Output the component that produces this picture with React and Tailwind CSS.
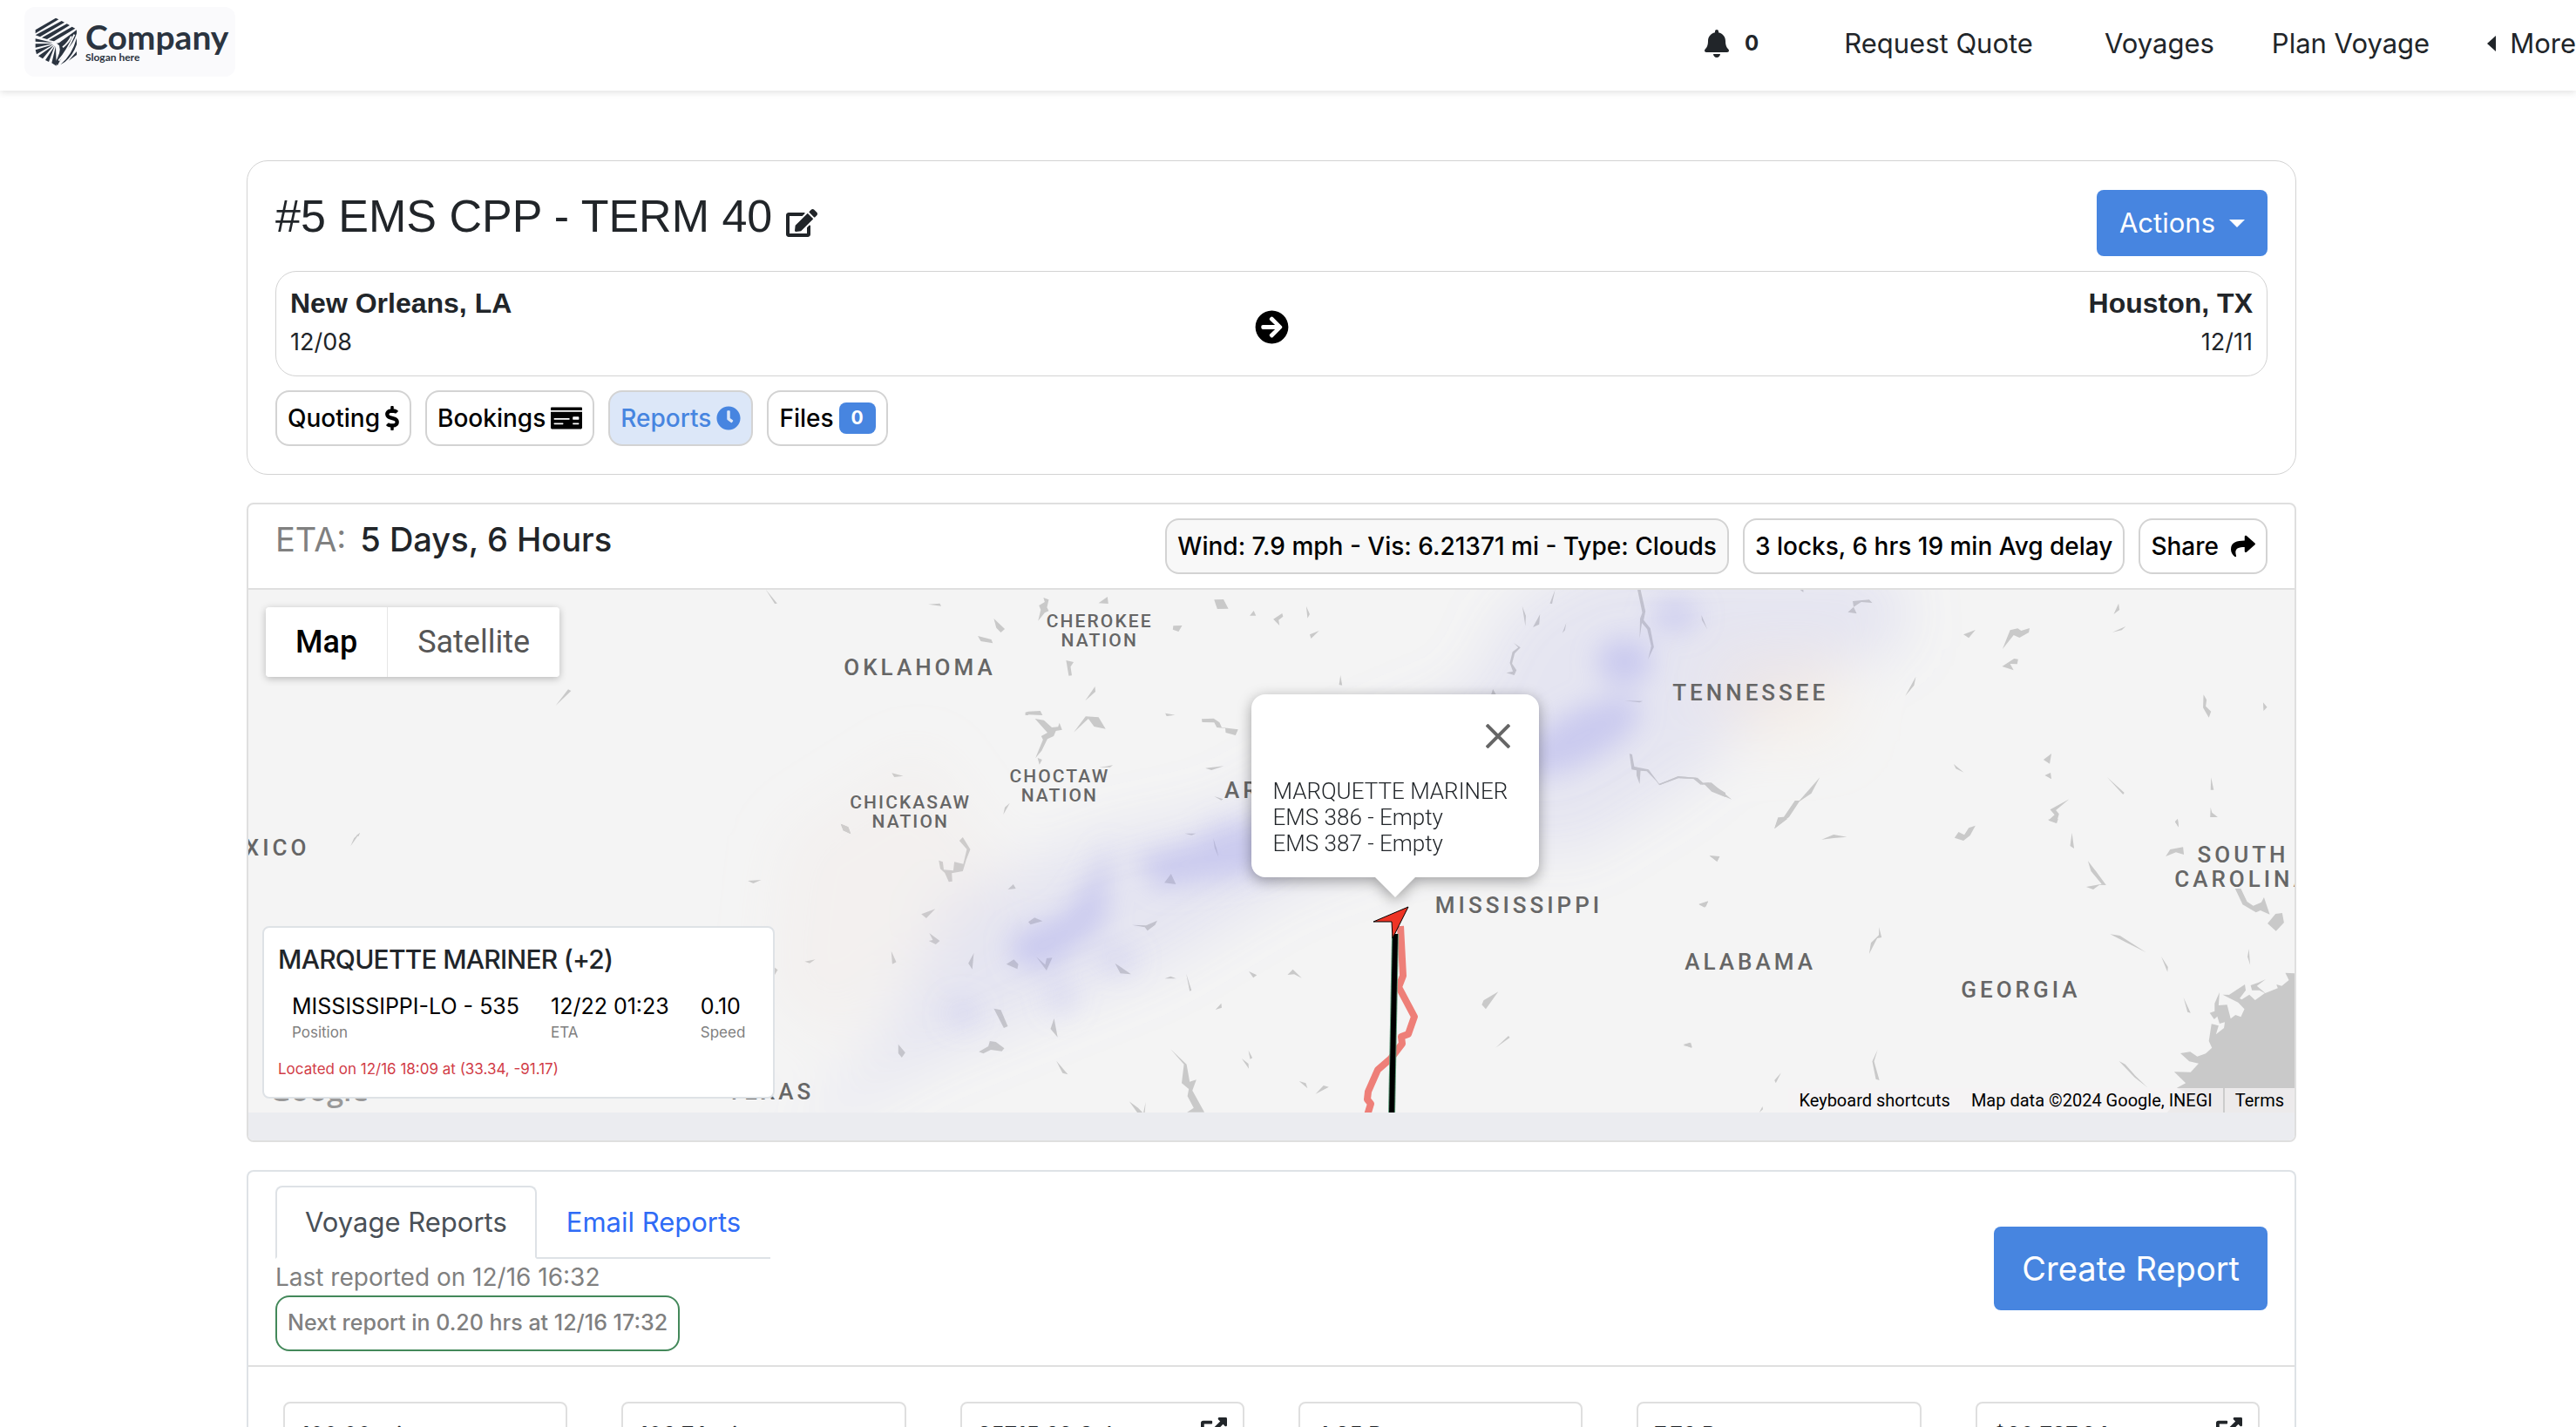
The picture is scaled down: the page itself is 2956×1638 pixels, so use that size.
import { useState } from 'react';
import {
  FaArrowCircleRight,
  FaBell,
  FaClock,
  FaDollarSign,
  FaEdit,
  FaExternalLinkAlt,
  FaMoneyCheck,
  FaShare,
} from 'react-icons/fa';

const stats = [
  { value: '100.00 mi' },
  { value: '106.74 mi' },
  { value: '35715.62 Gal', link: true },
  { value: '4.35 D' },
  { value: '7.76 D' },
  { value: '$20,737.24', link: true },
];

const vesselFields = [
  { label: 'Position', value: 'MISSISSIPPI-LO - 535' },
  { label: 'ETA', value: '12/22 01:23' },
  { label: 'Speed', value: '0.10' },
];

const pill = 'flex h-16 items-center rounded-2xl border-2 border-[#d3d3d3] px-3 text-[28px] font-medium text-black';

const Logo = () => (
  <a href="#home" className="flex h-20 items-center gap-2 rounded-xl bg-[#fafafc] pl-3 pr-2 text-[#2b3440]">
    <svg width="50" height="58" viewBox="0 0 150 170" fill="currentColor" aria-hidden="true">
      <path d="M2 44 72 3 82 8 2 56ZM2 62 92 13 102 18 18 68ZM24 71 110 23 120 28 42 76ZM48 79 128 33 139 39 66 83Z" />
      <path d="M2 74 62 88 2 84ZM2 92 62 91 2 105ZM2 113 64 94 6 128ZM12 134 66 96 27 143ZM36 148 69 98 48 154ZM58 158 72 100 74 168Z" />
      <path d="M70 86Q78 96 92 82L144 44V56Q134 92 104 118L78 166 68 158Q92 122 84 98Z" />
      <path d="M88 164Q128 130 144 72V94Q132 130 104 154ZM116 150 144 118V130Z" />
      <path d="M82 150Q112 116 136 60M96 104Q116 88 126 66" fill="none" stroke="#fafafc" strokeWidth="6" />
    </svg>
    <span className="flex flex-col font-['Lato',sans-serif] font-bold">
      <span className="text-[39px] leading-9">Company</span>
      <span className="text-xs leading-3">Slogan here</span>
    </span>
  </a>
);

const Navbar = () => (
  <header className="relative flex h-[104px] items-center justify-between bg-white pb-2 pl-7 shadow-[0_2px_8px_rgba(0,0,0,0.12)]">
    <Logo />
    <nav className="flex items-center gap-[66px] pt-1 text-[31px]">
      <button type="button" aria-label="Notifications" className="mr-8 flex items-center gap-4">
        <FaBell size={32} />
        <span className="text-2xl font-bold">0</span>
      </button>
      <a href="#quote" className="mr-4">Request Quote</a>
      <a href="#voyages">Voyages</a>
      <a href="#plan">Plan Voyage</a>
      <button type="button" className="flex items-center gap-4">
        <svg width="10" height="18" viewBox="0 0 10 18" fill="currentColor" aria-hidden="true">
          <path d="M10 0V18L0 9Z" />
        </svg>
        More
      </button>
    </nav>
  </header>
);

const VoyageCard = () => (
  <section className="rounded-3xl border border-[#d3d3d3] px-8 pb-8 pt-[33px]">
    <div className="flex items-start justify-between">
      <h1 className="flex items-end gap-4 font-['Liberation_Sans',Arial,sans-serif] text-[52px] leading-[60px]">
        #5 EMS CPP - TERM 40
        <button type="button" aria-label="Edit voyage name" className="pb-1"><FaEdit size={36} /></button>
      </h1>
      <button type="button" className="flex h-[76px] items-center gap-4 rounded-lg bg-[#4785e0] px-[26px] text-[31px] text-white">
        Actions
        <svg width="18" height="9" viewBox="0 0 18 9" fill="currentColor" aria-hidden="true">
          <path d="M0 0H18L9 9Z" />
        </svg>
      </button>
    </div>
    <div className="mt-[17px] flex h-[121px] items-center justify-between rounded-3xl border border-[#d3d3d3] px-4">
      <div className="flex-1 pb-1">
        <p className="font-['Liberation_Sans',Arial,sans-serif] text-[32px] font-bold leading-[46px]">New Orleans, LA</p>
        <p className="text-[27px] leading-[44px]">12/08</p>
      </div>
      <FaArrowCircleRight size={39} className="mt-2 text-black" />
      <div className="flex-1 pb-1 text-right">
        <p className="font-['Liberation_Sans',Arial,sans-serif] text-[32px] font-bold leading-[46px]">Houston, TX</p>
        <p className="text-[27px] leading-[44px]">12/11</p>
      </div>
    </div>
    <div className="mt-4 flex gap-4">
      <button type="button" className={`${pill} gap-1.5`}>Quoting <FaDollarSign size={28} className="-mx-1.5" /></button>
      <button type="button" className={`${pill} gap-1.5`}>Bookings <FaMoneyCheck size={36} /></button>
      <button type="button" className="flex h-16 items-center gap-1.5 rounded-2xl border-2 border-[#d3d3d3] bg-[#dce7f8] px-3 text-[28px] font-medium text-[#4785e0]">
        Reports <FaClock size={28} />
      </button>
      <button type="button" className={`${pill} gap-1.5`}>
        Files
        <span className="flex h-9 w-[42px] items-center justify-center rounded-lg bg-[#4785e0] text-[21px] font-bold text-white">0</span>
      </button>
    </div>
  </section>
);

const Terrain = () => (
  <svg className="absolute inset-0 h-full w-full" viewBox="285 677 2348 600" preserveAspectRatio="xMidYMid slice" aria-hidden="true">
    <defs>
      <filter id="soft" x="-50%" y="-50%" width="200%" height="200%"><feGaussianBlur stdDeviation="32" /></filter>
      <filter id="core" x="-50%" y="-50%" width="200%" height="200%"><feGaussianBlur stdDeviation="15" /></filter>
    </defs>
    <rect x="285" y="677" width="2348" height="600" fill="#f4f4f4" />

    {/* Water */}
    <g fill="#c9c9c9">
      <g transform="translate(280 560) scale(.574 .3333)">
        <path d="M1043 350 1066 398 1061 399ZM1368 401 1391 398 1394 407ZM1499 450 1521 486 1513 498 1504 482ZM1467 510 1494 522 1497 535 1473 528ZM623 750 648 694 654 699ZM1295 982 1318 992 1300 996ZM1518 1125 1521 1100 1531 1085ZM1193 1157 1208 1168 1213 1192 1198 1180ZM224 1198 232 1188 229 1200ZM1562 773 1568 770V783H1562Z" />
      </g>
      <g transform="translate(280 940) scale(.574 .3333)">
        <path d="M213 94 220 66 232 47 222 72ZM1193 17 1208 28 1213 52 1198 40ZM1430 75 1437 63 1452 105 1444 140 1437 180 1415 187 1416 215 1409 217 1401 186 1392 172 1389 143 1397 148 1399 175 1418 178 1420 148 1438 155 1445 104ZM1007 213 1034 210 1018 222ZM1527 243 1538 225 1543 240ZM1354 328 1382 310 1364 342ZM1370 393 1391 420 1383 432 1369 420 1377 417ZM1294 455 1304 493 1296 500ZM1459 462 1456 518 1448 497ZM1524 500 1539 484 1548 500 1546 517ZM1121 491 1142 484 1131 497ZM1058 508 1067 520 1060 540ZM1499 653 1513 658 1527 714 1519 720ZM1308 776 1322 805 1315 822 1308 807ZM1469 802 1488 783 1491 765 1503 768 1520 790 1515 800 1493 795 1478 808Z" />
      </g>
      <g transform="translate(1180 560) scale(.5102 .3333)">
        <path d="M34 378 46 385 42 412 46 424 37 430 22 458 28 420 24 405 37 393ZM158 397 178 375 180 399ZM418 385 439 384 450 416 425 417ZM498 440 507 423 512 440ZM551 452 571 432 573 443 563 455 565 474ZM625 407 633 435 628 449ZM326 475 346 474 338 495 325 488ZM633 505 654 492 636 519ZM85 594 102 600 95 616 98 646 91 647ZM150 684 151 702 128 733ZM702 645 706 680 699 678ZM0 770 27 768 32 783 0 781ZM15 795 35 800 53 825 67 823 70 809 76 833 62 837 57 855 43 865 30 905 16 931 33 867 29 855 43 843ZM102 842 129 787 158 790 174 830 148 822 135 795ZM308 776 330 782 311 786ZM390 796 417 794 430 808 435 825 472 832 466 852 444 843 443 828 424 825 418 808 391 807ZM21 930 31 936 25 953ZM159 963 190 955 184 962ZM398 965 440 958 412 972ZM1185 350 1178 399 1173 398ZM1111 408 1119 440 1118 476ZM1151 435 1149 470 1135 480ZM1210 465 1207 490 1201 500ZM1370 350 1377 350 1388 425 1384 455 1399 484 1407 548 1394 590 1401 545 1392 487 1380 465 1375 518 1376 450 1381 430ZM1092 534 1107 550 1094 570 1088 605 1098 628 1093 645 1075 637 1090 632 1083 603 1089 565 1102 550ZM1514 438 1520 460 1527 487 1515 455ZM1045 693 1052 712H1041ZM1341 733 1382 734 1375 739ZM1352 915 1358 918 1363 960 1395 970 1419 1019 1462 994 1505 998 1518 1016 1530 1015 1568 1050V1065L1537 1046 1520 1020 1512 1022 1496 1002 1462 1000 1421 1023 1391 976 1377 974 1375 1020 1368 990V973L1357 970Z" />
      </g>
      <g transform="translate(1180 900) scale(.5102 .3333)">
        <path d="M418 42 438 52 434 56ZM352 170 377 170 367 176ZM416 186 424 225 428 252 419 220ZM306 340 321 309 332 345ZM0 475 14 460 32 472 5 484ZM233 485 265 487 290 470 285 485 268 505 262 493ZM18 595 38 622 41 600 54 598 41 642ZM195 617 210 632 231 655 207 652ZM307 670 320 662 333 670ZM355 652 367 710 363 713ZM496 645 514 658 506 667ZM583 657 595 638 615 668 598 655ZM421 777 434 755 435 770ZM58 807 66 872 50 843ZM63 953 89 1000 77 995ZM320 913 356 965 363 1025 378 1018 369 1055 396 1130H357L372 1115 358 1075 361 1050 345 1030 350 965ZM227 1093 247 1115 257 1131H245ZM264 1095 262 1131H259ZM495 917 504 943 499 947ZM480 945 495 963 496 980ZM609 1023 624 1030 628 1048ZM646 1067 664 1038 676 1043ZM1020 760 1024 745 1057 715 1029 775ZM1051 908 1080 867 1083 873ZM1532 247 1554 250 1549 266ZM1508 413 1529 403 1524 422ZM1473 900 1490 891 1493 907Z" />
      </g>
      <g transform="translate(1900 560) scale(.5102 .3333)">
        <path d="M324 350H332V360ZM443 390 480 385 487 396 462 393 445 410 452 433 432 428 445 410ZM692 505 719 489 704 517ZM797 490 814 484 822 492 841 483 839 498 818 516 805 507 780 555ZM1041 398 1043 420 1030 435ZM1057 477 1048 490 1027 497ZM779 615 806 588 815 590 813 607 797 606 805 628ZM585 650 581 680 561 717ZM1232 712 1239 730 1237 752 1249 770 1244 791 1231 757ZM1366 739 1375 755 1367 768ZM890 915 886 950 872 936ZM670 951 693 980 675 967ZM875 990 888 981 890 1003ZM369 997 350 1052 323 1080 300 1133 267 1173 275 1135 288 1133 313 1077 323 1077ZM1015 996 1054 1050 1051 1056ZM1249 997 1255 1040H1248ZM930 1072 900 1110 907 1123 901 1155 883 1145 897 1126 887 1108ZM1248 1100 1251 1118 1264 1134H1247ZM1168 1150 1174 1140 1176 1168ZM0 1007 8 1020 50 993 90 998 105 1016 125 1015 171 1073 135 1050 120 1021 104 1022 90 1003 50 999 8 1024Z" />
      </g>
      <g transform="translate(1900 940) scale(.5102 .3333)">
        <path d="M275 0H296L267 34ZM373 71 400 54 430 62 400 66ZM882 2 905 0 902 14ZM672 65 681 45 694 55 704 31 719 23 707 57 692 75ZM936 48 941 102 932 93ZM1168 10 1174 0 1176 29ZM121 127 144 129 138 147ZM97 295 118 284 110 305ZM1147 129 1157 105 1186 97 1188 123 1170 115ZM972 145 990 180 1013 228 998 227 984 243 968 234 1003 224 979 180ZM1303 240 1316 240 1330 285 1344 299 1362 287 1368 270 1381 329 1360 315 1350 322 1320 295ZM1376 360 1394 327 1409 324 1413 357 1395 386ZM502 373 508 408 498 411 480 465 484 427 502 400ZM1022 397 1044 402 1103 460 1060 427ZM1137 474 1152 510 1151 527ZM1334 448 1337 503 1331 475ZM1187 615 1203 668 1196 665ZM62 777 77 770 81 789ZM499 795 491 835 503 900 495 896 487 835ZM282 874 270 910 267 900ZM1042 834 1056 845 1079 885 1106 925 1077 890ZM233 1011 240 990 241 1000ZM1325 570 1327 590 1310 625 1290 605Z" />
        <path d="M1440 532 1416 530 1424 555 1408 575 1396 570 1399 583 1371 600 1352 575 1372 552 1356 563 1338 573 1341 590 1358 590 1370 600 1348 624 1335 605 1318 622 1298 606 1275 605 1310 632 1324 655 1316 682 1304 675 1293 688 1285 640 1266 642 1268 597 1257 635 1257 662 1246 668 1256 690 1263 680 1268 705 1280 700 1278 720 1260 742 1266 712 1250 706 1244 765 1251 788 1237 808 1218 818 1202 802 1180 807 1200 835 1221 842 1203 872 1166 871 1192 910 1172 926 1190 940 1150 1011H1440Z" />
        <path d="M1224 773 1231 792 1238 776 1236 803Z" fill="#f4f4f4" />
      </g>
    </g>

    {/* Precipitation overlay */}
    <g filter="url(#soft)" fill="#9999e0" fillOpacity=".17">
      <path d="M900 1320 1010 1200 1090 1030 1260 960 1400 930 1500 870 1690 790 1730 700 1830 640 2180 650 2190 740 2040 800 1940 900 1810 980 1640 960 1480 1020 1330 1110 1180 1170 1060 1220Z" />
      <path d="M900 960 1060 860 1160 1000 960 1200 880 1140Z" fill="#f0dcd4" />
      <path d="M1970 760 2120 750 2110 850 1990 850Z" fill="#f8e4d0" fillOpacity=".3" />
    </g>
    <g filter="url(#core)" fill="#a6a6ec" fillOpacity=".42">
      <ellipse cx="1814" cy="845" rx="76" ry="30" transform="rotate(-28 1814 845)" />
      <ellipse cx="1864" cy="760" rx="32" ry="28" />
      <ellipse cx="1922" cy="706" rx="28" ry="20" fillOpacity=".32" />
      <path d="M1300 985 1370 965 1400 945 1500 940 1460 1000 1330 1020Z" />
      <path d="M1158 1075 1220 1050 1250 1010 1275 965 1268 1060 1205 1112 1165 1110Z" />
      <ellipse cx="1282" cy="1102" rx="24" ry="16" fillOpacity=".22" />
      <ellipse cx="1218" cy="1145" rx="18" ry="20" fillOpacity=".22" />
      <ellipse cx="1105" cy="1163" rx="20" ry="16" fillOpacity=".22" />
    </g>

    {/* Sailed track, planned course and vessel */}
    <path d="M1607 1063 1610 1120 1605 1133 1623 1167 1616 1187 1608 1190 1609 1198 1596 1215 1581 1228 1570 1253 1569 1262 1573 1267 1569 1280" fill="none" stroke="#ee7f78" strokeWidth="8" strokeLinejoin="round" />
    <path d="M1601 1072 1597 1280" stroke="#5b9a78" strokeWidth="8" />
    <path d="M1601 1072 1597 1280" stroke="#000" strokeWidth="6" />
    <path d="M1616 1041 1576 1058 1597 1058 1598 1077Z" fill="#ee3425" stroke="#000" strokeWidth="1" />
  </svg>
);

const VoyageMap = () => {
  const [mapType, setMapType] = useState('map');

  return (
    <div className="relative h-[600px] overflow-hidden font-['Roboto',sans-serif]">
      <Terrain />

      {/* Place names */}
      <div className="absolute inset-0 whitespace-nowrap text-[26px] font-medium leading-7 tracking-[4px] text-[#666]">
        <span className="absolute left-[29.1%] top-[75px]">OKLAHOMA</span>
        <span className="absolute left-[69.6%] top-[104px]">TENNESSEE</span>
        <span className="absolute left-[58%] top-[348px]">MISSISSIPPI</span>
        <span className="absolute left-[70.2%] top-[413px]">ALABAMA</span>
        <span className="absolute left-[83.7%] top-[445px]">GEORGIA</span>
        <span className="absolute left-[47.7%] top-[216px]">ARKANSAS</span>
        <span className="absolute -right-5 top-[290px] text-center">SOUTH<br />CAROLINA</span>
        <span className="absolute right-[97%] top-[282px]">NEW MEXICO</span>
        <span className="absolute left-[23.4%] top-[562px]">TEXAS</span>
        <span className="absolute left-[39%] top-[25px] text-center text-[21px] leading-[22px] tracking-widest">CHEROKEE<br />NATION</span>
        <span className="absolute left-[37.2%] top-[203px] text-center text-[21px] leading-[22px] tracking-widest">CHOCTAW<br />NATION</span>
        <span className="absolute left-[29.4%] top-[233px] text-center text-[21px] leading-[22px] tracking-widest">CHICKASAW<br />NATION</span>
      </div>

      <div className="absolute left-5 top-5 flex rounded shadow-[0_2px_8px_rgba(0,0,0,0.25)]">
        <button
          type="button"
          onClick={() => setMapType('map')}
          className={`h-20 rounded-l bg-white px-[34px] text-4xl ${mapType === 'map' ? 'font-medium text-black' : 'text-[#565656]'}`}
        >
          Map
        </button>
        <button
          type="button"
          onClick={() => setMapType('satellite')}
          className={`h-20 rounded-r border-l border-[#e6e6e6] bg-white px-[34px] text-4xl ${mapType === 'satellite' ? 'font-medium text-black' : 'text-[#565656]'}`}
        >
          Satellite
        </button>
      </div>

      {/* Vessel popup */}
      <div className="absolute left-[49%] top-[120px] h-[210px] w-[330px] rounded-2xl bg-white px-[25px] drop-shadow-[0_4px_8px_rgba(0,0,0,0.35)]">
        <div className="flex h-24 items-center justify-end pr-2">
          <button type="button" aria-label="Close">
            <svg width="28" height="28" viewBox="0 0 28 28" stroke="#666" strokeWidth="4" aria-hidden="true">
              <path d="M1 1 27 27M27 1 1 27" />
            </svg>
          </button>
        </div>
        <p className="text-[26px] font-light leading-[30px] text-[#212529]">
          MARQUETTE MARINER<br />EMS 386 - Empty<br />EMS 387 - Empty
        </p>
        <svg className="absolute left-1/2 top-full -translate-x-1/2" width="46" height="23" viewBox="0 0 46 23" fill="#fff" aria-hidden="true">
          <path d="M0 0H46L23 23Z" />
        </svg>
      </div>

      <span className="absolute bottom-2 left-6 font-['Open_Sans',sans-serif] text-[34px] font-semibold leading-9 text-[#999]">Google</span>

      <div className="absolute bottom-0 right-0 flex h-7 items-center bg-[#f5f3f4]/80 text-xl text-black">
        <button type="button" className="px-3">Keyboard shortcuts</button>
        <span className="px-3">Map data ©2024 Google, INEGI</span>
        <a href="#terms" className="border-l-2 border-[#ccc] px-3">Terms</a>
      </div>

      {/* Vessel summary */}
      <div className="absolute bottom-4 left-4 rounded-lg border-2 border-[#dee2e6] bg-white px-4 pb-4 pt-[18px] font-['Inter',sans-serif]">
        <h2 className="text-[30px] font-medium leading-9 tracking-tight text-[#212529]">MARQUETTE MARINER (+2)</h2>
        <dl className="mt-[18px] flex gap-9 px-4">
          {vesselFields.map(field => (
            <div key={field.label} className="flex flex-col-reverse">
              <dt className="text-[17px] leading-6 text-[#808080]">{field.label}</dt>
              <dd className="text-[25px] leading-9 text-black">{field.value}</dd>
            </div>
          ))}
        </dl>
        <p className="mt-[18px] pb-1 text-[17px] leading-6 text-[#d13c47]">Located on 12/16 18:09 at (33.34, -91.17)</p>
      </div>
    </div>
  );
};

const MapCard = () => (
  <section className="mt-8 overflow-hidden rounded-lg border-2 border-[#dfdfdf]">
    <div className="flex items-center justify-between border-b-2 border-[#dfdfdf] px-[31px] py-4">
      <h2 className="flex gap-4 pb-4 text-[38px] leading-[48px]">
        <span className="text-[#808080]">ETA:</span>
        <span className="font-medium">5 Days, 6 Hours</span>
      </h2>
      <div className="flex gap-4">
        <div className="flex h-16 items-center rounded-2xl border-2 border-[#d3d3d3] bg-[#f8f8f8] px-3 text-[28px] font-medium text-black">
          Wind: 7.9 mph - Vis: 6.21371 mi - Type: Clouds
        </div>
        <button type="button" className={pill}>3 locks, 6 hrs 19 min Avg delay</button>
        <button type="button" className={`${pill} gap-3.5`}>Share <FaShare size={28} /></button>
      </div>
    </div>
    <VoyageMap />
    <div className="h-8 bg-[#ebecf0]" />
  </section>
);

const ReportsCard = () => {
  const [tab, setTab] = useState('voyage');
  const active = 'border-[#dee2e6] border-b-white bg-white text-[#495057]';
  const idle = 'border-transparent text-[#2f6bf6]';

  return (
    <section className="mt-8 rounded-t-lg border-2 border-[#dee2e6] border-b-0">
      <div className="flex items-center justify-between border-b-2 border-[#dfdfdf] px-[31px] py-4">
        <div>
          <div role="tablist" className="flex border-b-2 border-[#dee2e6] text-[31px]">
            <button
              type="button"
              role="tab"
              aria-selected={tab === 'voyage'}
              onClick={() => setTab('voyage')}
              className={`-mb-0.5 h-[84px] rounded-t-lg border-2 px-8 ${tab === 'voyage' ? active : idle}`}
            >
              Voyage Reports
            </button>
            <button
              type="button"
              role="tab"
              aria-selected={tab === 'email'}
              onClick={() => setTab('email')}
              className={`-mb-0.5 h-[84px] rounded-t-lg border-2 px-8 ${tab === 'email' ? active : idle}`}
            >
              Email Reports
            </button>
          </div>
          <p className="text-[28px] leading-[42px] text-[#808080]">Last reported on 12/16 16:32</p>
          <p className="flex h-16 w-fit items-center rounded-2xl border-2 border-[#43885a] px-3 text-[25px] font-medium text-[#808080]">
            Next report in 0.20 hrs at 12/16 17:32
          </p>
        </div>
        <button type="button" className="h-24 rounded-lg bg-[#4785e0] px-8 text-[38px] text-white">Create Report</button>
      </div>
      <div className="grid grid-cols-6 gap-[62px] px-10 pt-10">
        {stats.map(stat => (
          <div key={stat.value} className="flex h-32 justify-between rounded-lg border-2 border-[#dfdfdf] px-[18px] py-4">
            <span className="pt-0.5 text-[25px] font-medium leading-9">{stat.value}</span>
            {stat.link && <a href="#detail" aria-label="Open details"><FaExternalLinkAlt size={30} /></a>}
          </div>
        ))}
      </div>
    </section>
  );
};

const App = () => (
  <div className="h-screen overflow-hidden bg-white font-['Inter',sans-serif] text-[#212529]">
    <Navbar />
    <div className="pr-[38px] pt-20">
      <main className="mx-auto max-w-[2352px]">
        <VoyageCard />
        <MapCard />
        <ReportsCard />
      </main>
    </div>
  </div>
);

export default App;
